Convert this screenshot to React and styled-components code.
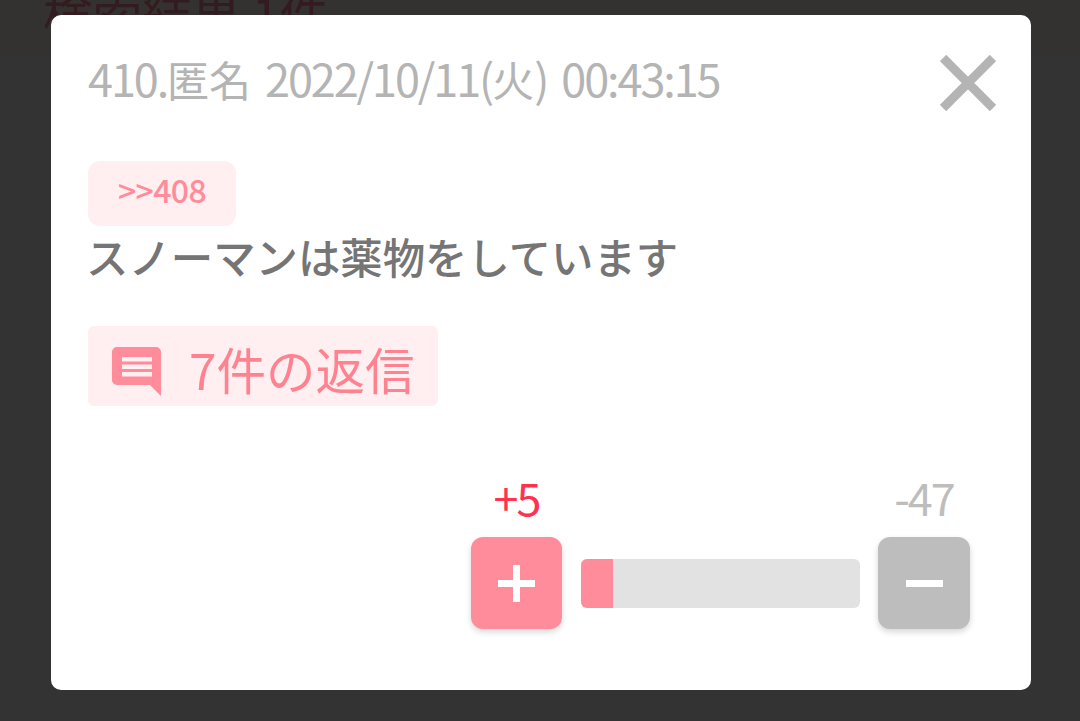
import React from 'react';
import styled, { createGlobalStyle } from 'styled-components';

const GlobalStyle = createGlobalStyle`
  html, body { margin: 0; padding: 0; height: 100%; }
  body { font-family: "Noto Sans CJK JP", "Noto Sans", sans-serif; background: #fff; overflow: hidden; }
`

const Page = styled.div`
  position: relative;
  width: 1080px;
  height: 721px;
  background: #fff;
  overflow: hidden;
`
const TopBand = styled.div`
  height: 77px;
  padding-left: 43px;
  background: #fff9f4;
  box-sizing: border-box;
`
const PageTitle = styled.h1`
  margin: 0;
  margin-top: -22px;
  font-size: 49.5px;
  font-weight: 400;
  line-height: 70px;
  color: #ff8c9a;
`
const YellowBlock = styled.div`
  width: 210px;
  height: 60px;
  margin: 564px 0 0 261px;
  border-radius: 4px;
  background: #fff0b4;
`
const Overlay = styled.div`
  position: absolute;
  inset: 0;
  background: rgba(0, 0, 0, 0.8);
  display: flex;
  align-items: flex-start;
  justify-content: center;
  padding: 15px 0 0 2px;
`
const Modal = styled.div`
  width: 980px;
  height: 675px;
  box-sizing: border-box;
  padding: 33px 35px 0 37px;
  background: #fff;
  border-radius: 10px;
  display: flex;
  flex-direction: column;
`
const Header = styled.div`
  display: flex;
  justify-content: space-between;
  align-items: flex-start;
  height: 113px;
`
const Meta = styled.div`
  font-size: 45px;
  line-height: 60px;
  letter-spacing: -2.1px;
  word-spacing: 6px;
  color: #b4b4b4;
  white-space: nowrap;
`
const Kanji = styled.span`
  font-size: 42px;
  letter-spacing: 0;
`
const CloseButton = styled.button`
  width: 56px;
  height: 56px;
  margin-top: 7px;
  border: 0;
  padding: 0;
  background: none;
  display: block;
`
const Anchor = styled.div`
  width: 148px;
  height: 65px;
  border-radius: 12px;
  background: #ffeff0;
  color: #ff8c9a;
  font-size: 32px;
  font-weight: 500;
  line-height: 56px;
  letter-spacing: -0.6px;
  text-align: center;
`
const Body = styled.div`
  margin-left: -2px;
  font-size: 42.4px;
  font-weight: 500;
  line-height: 60px;
  color: #757575;
`
const Replies = styled.div`
  align-self: flex-start;
  margin-top: 40px;
  height: 80px;
  padding: 0 24px;
  display: flex;
  align-items: center;
  gap: 28px;
  border-radius: 6px;
  background: #ffeff0;
  color: #ff8290;
  font-size: 49.5px;
`
const ReplyText = styled.span`
  padding-top: 4px;
`
const ReplyMark = styled.svg`
  margin-top: 11px;
`
const VoteArea = styled.div`
  margin-top: 61px;
  padding-left: 383px;
  display: grid;
  grid-template-columns: 91px 280px 92px;
  column-gap: 18px;
  row-gap: 10px;
  width: 499px;
`
const Count = styled.div`
  text-align: center;
  font-size: 45px;
  line-height: 60px;
  letter-spacing: -2px;
  color: ${p => p.$color};
`
const VoteButton = styled.button`
  width: ${p => p.$wide ? 92 : 91}px;
  height: 92px;
  border: 0;
  padding: 0;
  border-radius: 12px;
  background: ${p => p.$color};
  box-shadow: 0 3px 6px rgba(0, 0, 0, 0.16);
  display: flex;
  align-items: center;
  justify-content: center;
`
const Track = styled.div`
  align-self: center;
  margin-left: 1px;
  height: 49px;
  border-radius: 6px;
  background: #e2e2e2;
  overflow: hidden;
`
const Fill = styled.div`
  height: 100%;
  background: #ff8c9a;
`

const CommentIcon = () => (
  <ReplyMark width="49" height="49" viewBox="0 0 49 49">
    <path fill="#ff8c9a" fillRule="evenodd" d="M5 0h39a5 5 0 0 1 5 5v44L38 38H5a5 5 0 0 1-5-5V5a5 5 0 0 1 5-5z M10 10v4.5h30V10z M10 17.5v4.5h30v-4.5z M10 25v4.5h30V25z" />
  </ReplyMark>
)

const CloseIcon = () => (
  <svg width="56" height="56" viewBox="0 0 56 56">
    <path stroke="#b4b4b4" strokeWidth="9" d="M3 3 53 53 M53 3 3 53" />
  </svg>
)

const PlusIcon = () => (
  <svg width="37" height="37" viewBox="0 0 37 37">
    <path fill="#fff" d="M15 0h7v15h15v7H22v15h-7V22H0v-7h15z" />
  </svg>
)

const MinusIcon = () => (
  <svg width="37" height="7" viewBox="0 0 37 7">
    <rect width="37" height="7" fill="#fff" />
  </svg>
)

export default function App() {
  return (
    <Page>
      <GlobalStyle />
      <TopBand>
        <PageTitle>検索結果 1件</PageTitle>
      </TopBand>
      <YellowBlock />
      <Overlay>
        <Modal>
          <Header>
            <Meta>410.<Kanji>匿名</Kanji> 2022/10/11(<Kanji>火</Kanji>) 00:43:15</Meta>
            <CloseButton><CloseIcon /></CloseButton>
          </Header>
          <Anchor>&gt;&gt;408</Anchor>
          <Body>スノーマンは薬物をしています</Body>
          <Replies>
            <CommentIcon />
            <ReplyText>7件の返信</ReplyText>
          </Replies>
          <VoteArea>
            <Count $color="#ff334d">+5</Count>
            <span />
            <Count $color="#bdbdbd">-47</Count>
            <VoteButton $color="#ff8c9a"><PlusIcon /></VoteButton>
            <Track><Fill style={{ width: '11.5%' }} /></Track>
            <VoteButton $color="#bdbdbd" $wide><MinusIcon /></VoteButton>
          </VoteArea>
        </Modal>
      </Overlay>
    </Page>
  )
}
